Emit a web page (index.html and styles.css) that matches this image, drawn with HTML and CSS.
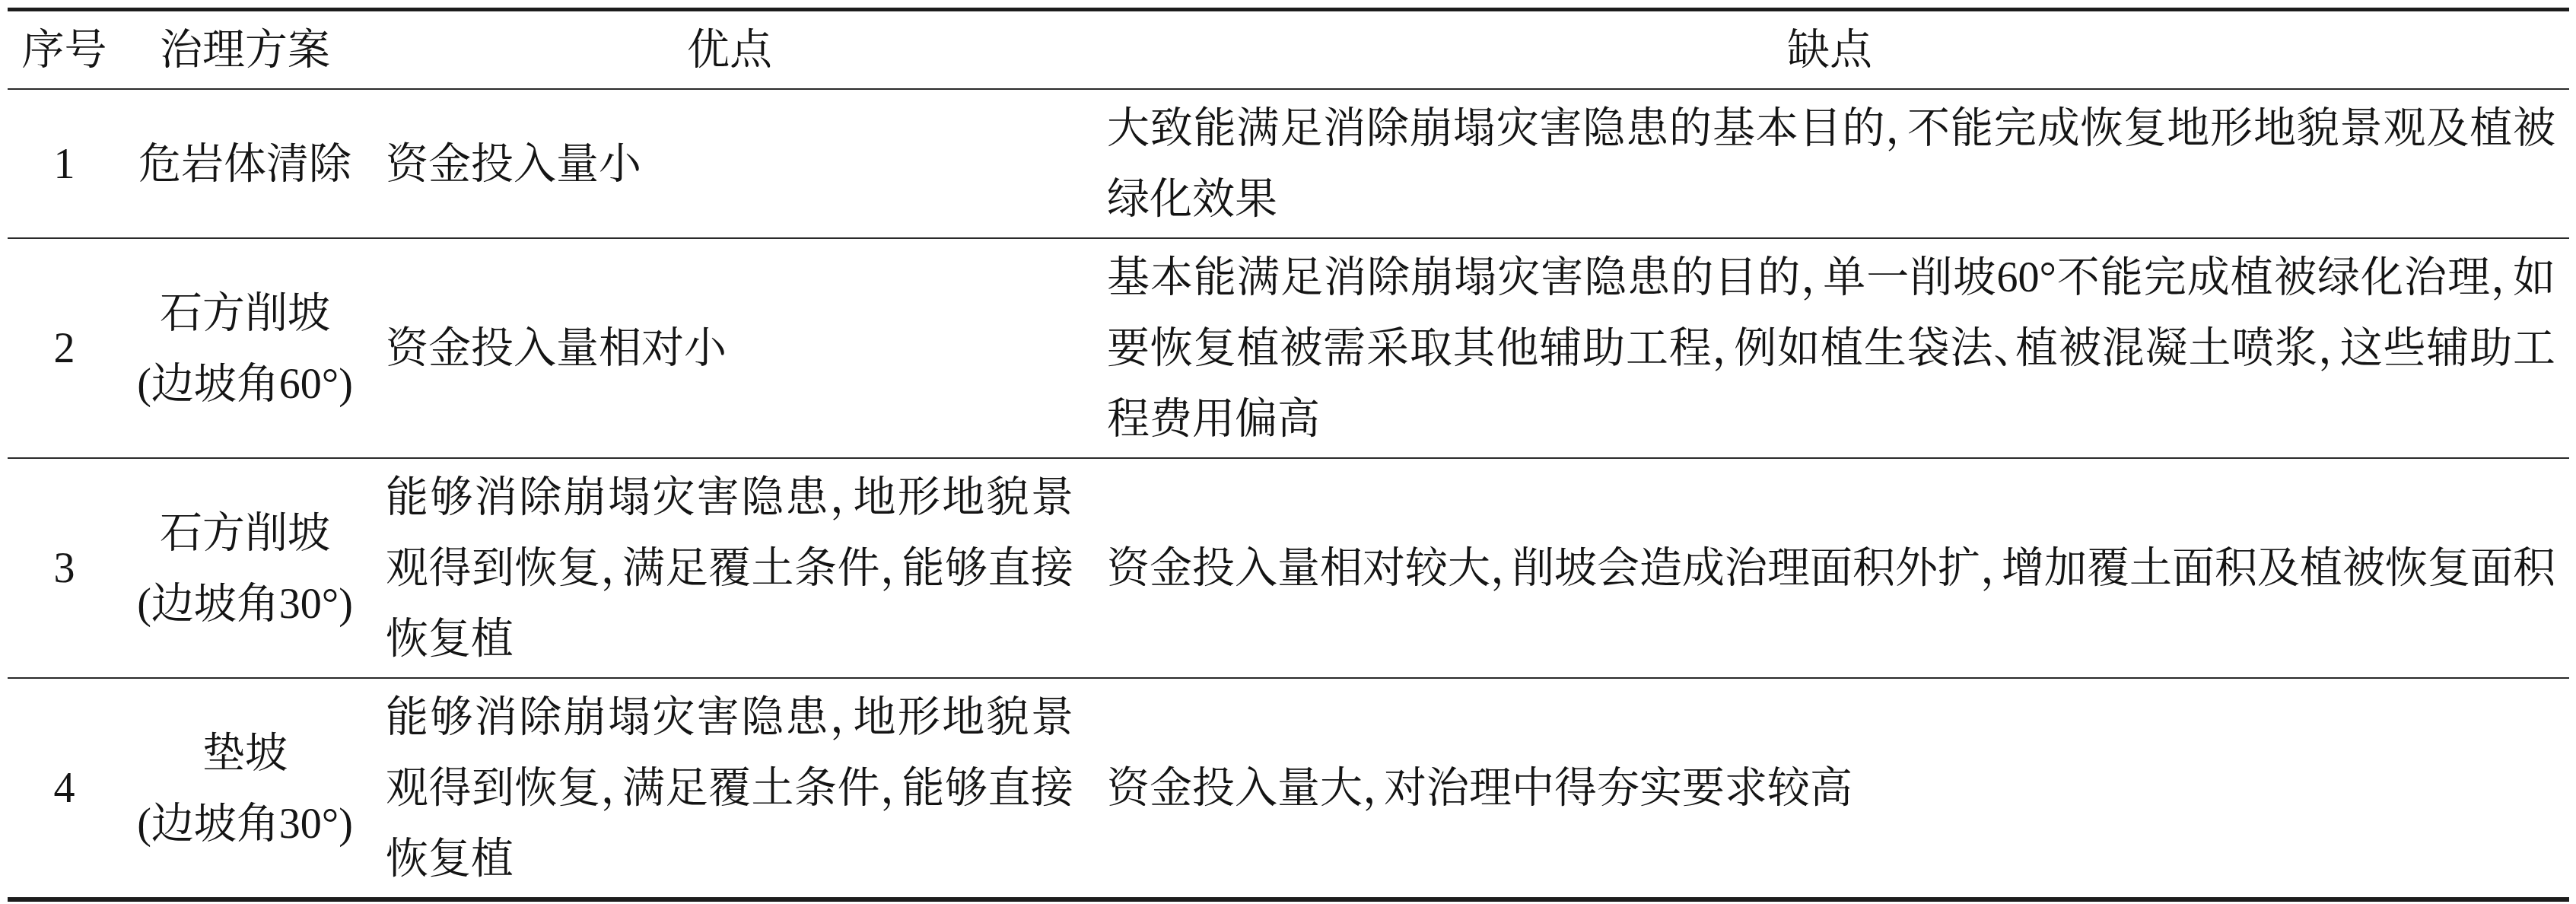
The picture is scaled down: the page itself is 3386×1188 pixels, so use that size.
FILE: index.html
```html
<!DOCTYPE html>
<html lang="zh-CN">
<head>
<meta charset="utf-8">
<title>治理方案对比</title>
<link rel="stylesheet" href="styles.css">
</head>
<body>
<table class="tbl">
  <colgroup>
    <col class="c1">
    <col class="c2">
    <col class="c3">
    <col class="c4">
  </colgroup>
  <thead>
    <tr>
      <th class="ctr">序号</th>
      <th class="ctr">治理方案</th>
      <th class="ctr">优点</th>
      <th class="ctr">缺点</th>
    </tr>
  </thead>
  <tbody>
    <tr>
      <td class="ctr">1</td>
      <td class="ctr">危岩体清除</td>
      <td class="txt pro">资金投入量小</td>
      <td class="txt con"><span class="jl">大致能满足消除崩塌灾害隐患的基本目的，不能完成恢复地形地貌景观及植被</span>绿化效果</td>
    </tr>
    <tr>
      <td class="ctr">2</td>
      <td class="ctr">石方削坡<br>(边坡角60°)</td>
      <td class="txt pro">资金投入量相对小</td>
      <td class="txt con"><span class="jl">基本能满足消除崩塌灾害隐患的目的，单一削坡60°不能完成植被绿化治理，如</span><span class="jl">要恢复植被需采取其他辅助工程，例如植生袋法、植被混凝土喷浆，这些辅助工</span>程费用偏高</td>
    </tr>
    <tr>
      <td class="ctr">3</td>
      <td class="ctr">石方削坡<br>(边坡角30°)</td>
      <td class="txt pro"><span class="jl">能够消除崩塌灾害隐患，地形地貌景</span><span class="jl">观得到恢复，满足覆土条件，能够直接</span>恢复植</td>
      <td class="txt con">资金投入量相对较大，削坡会造成治理面积外扩，增加覆土面积及植被恢复面积</td>
    </tr>
    <tr>
      <td class="ctr">4</td>
      <td class="ctr">垫坡<br>(边坡角30°)</td>
      <td class="txt pro"><span class="jl">能够消除崩塌灾害隐患，地形地貌景</span><span class="jl">观得到恢复，满足覆土条件，能够直接</span>恢复植</td>
      <td class="txt con">资金投入量大，对治理中得夯实要求较高</td>
    </tr>
  </tbody>
</table>
</body>
</html>
```

FILE: styles.css
```css
html, body {
  margin: 0;
  padding: 0;
  background: #ffffff;
}

body {
  padding: 10px 0 0 10px;
}

.tbl {
  width: 3367px;
  table-layout: fixed;
  border-collapse: separate;
  border-spacing: 0;
  border-top: 5px solid #1c1c1c;
  border-bottom: 6px solid #1c1c1c;
  font-family: "Liberation Serif", "Noto Serif CJK SC", "Noto Sans CJK SC", serif;
  font-size: 56px;
  line-height: 93px;
  color: #141414;
  font-feature-settings: "halt" 1;
}

.c1 { width: 149px; }
.c2 { width: 326px; }
.c3 { width: 948px; }
.c4 { width: 1944px; }

.tbl th,
.tbl td {
  padding: 4px 0;
  vertical-align: middle;
  font-weight: normal;
  border-bottom: 2px solid #2a2a2a;
}

.tbl tbody tr:last-child td {
  border-bottom: none;
}

.ctr {
  text-align: center;
}

.txt {
  text-align: left;
  white-space: nowrap;
}

.pro {
  padding-left: 22px;
  padding-right: 22px;
}

.tbl td.pro {
  padding-left: 22px;
  padding-right: 22px;
}

.tbl td.con {
  padding-left: 22px;
  padding-right: 18px;
}

.jl {
  display: block;
  text-align: justify;
  text-align-last: justify;
}
```
